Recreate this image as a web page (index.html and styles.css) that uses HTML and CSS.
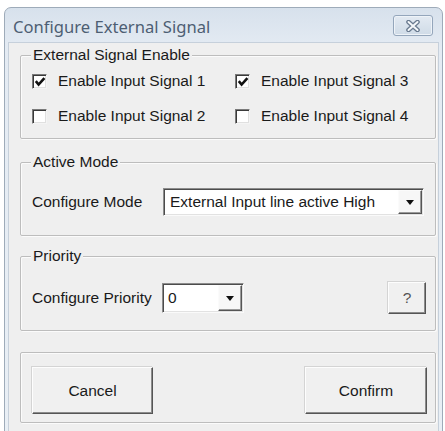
FILE: index.html
```html
<!DOCTYPE html>
<html>
<head>
<meta charset="utf-8">
<title>Configure External Signal</title>
<link rel="stylesheet" href="styles.css">
</head>
<body>
<div class="window">
  <div class="titlebar">
    <span class="title">Configure External Signal</span>
    <div class="close">
      <svg width="16" height="12" viewBox="0 0 16 12">
        <path d="M3.5 2 L12.5 10 M12.5 2 L3.5 10" stroke="#6a7b90" stroke-width="4.6" stroke-linecap="round" fill="none"/>
        <path d="M3.5 2 L12.5 10 M12.5 2 L3.5 10" stroke="#f4f7fa" stroke-width="2" stroke-linecap="round" fill="none"/>
      </svg>
    </div>
  </div>
  <div class="client">
    <div class="group g-enable">
      <span class="legend">External Signal Enable</span>
      <div class="checks">
        <div class="check"><span class="box"><svg width="12" height="12" viewBox="0 0 12 12"><path d="M1.8 5.2 L4.6 8.6 L10.4 2.2" stroke="#111" stroke-width="2.6" fill="none"/></svg></span><span>Enable Input Signal 1</span></div>
        <div class="check"><span class="box"><svg width="12" height="12" viewBox="0 0 12 12"><path d="M1.8 5.2 L4.6 8.6 L10.4 2.2" stroke="#111" stroke-width="2.6" fill="none"/></svg></span><span>Enable Input Signal 3</span></div>
        <div class="check"><span class="box"></span><span>Enable Input Signal 2</span></div>
        <div class="check"><span class="box"></span><span>Enable Input Signal 4</span></div>
      </div>
    </div>

    <div class="group g-mode">
      <span class="legend">Active Mode</span>
      <div class="row">
        <span class="label mode-label">Configure Mode</span>
        <div class="combo combo-mode">
          <span class="value">External Input line active High</span>
          <span class="drop"><span class="tri"></span></span>
        </div>
      </div>
    </div>

    <div class="group g-priority">
      <span class="legend">Priority</span>
      <div class="row prow">
        <span class="label prio-label">Configure Priority</span>
        <div class="combo combo-prio">
          <span class="value">0</span>
          <span class="drop"><span class="tri"></span></span>
        </div>
        <div class="btn help">?</div>
      </div>
    </div>

    <div class="group g-buttons">
      <div class="btn action">Cancel</div>
      <div class="btn action confirm">Confirm</div>
    </div>
  </div>
</div>
</body>
</html>
```

FILE: styles.css
```css
html, body {
  margin: 0;
  padding: 0;
  background: #ffffff;
  overflow: hidden;
}

body {
  font-family: "Liberation Sans", Arial, sans-serif;
  font-size: 15.5px;
  color: #1a1a1a;
}

.window {
  margin: 7px 0 0 4px;
  width: 439px;
  height: 440px;
  box-sizing: border-box;
  border: 1px solid #9eabb9;
  border-radius: 7px 7px 0 0;
  background: linear-gradient(#d7e1ec, #e4ebf3 40px, #e9eff5);
}

.titlebar {
  height: 34px;
  display: flex;
  align-items: flex-start;
  justify-content: space-between;
  padding: 7px 9px 0 8px;
  box-sizing: border-box;
}

.title {
  font-family: "Noto Sans", "Open Sans", sans-serif;
  font-size: 16.6px;
  line-height: 20px;
  margin-top: 2px;
  color: #4d5e73;
}

.close {
  width: 40px;
  height: 21px;
  box-sizing: border-box;
  border: 1px solid #94a6bb;
  border-radius: 3px;
  background: linear-gradient(#e3eaf2, #cfdbe7);
  box-shadow: inset 0 0 0 1px #eef3f8;
  display: flex;
  align-items: center;
  justify-content: center;
}

.close svg { display: block; }

.client {
  margin: 0 3px;
  background: #efefef;
  border: 1px solid #c6d0db;
  border-bottom: none;
  padding: 12px 2px 12px 11px;
}

.group {
  position: relative;
  border: 1px solid #bdbdbd;
  box-shadow: inset 1px 1px 0 #fbfbfb, 1px 1px 0 #fbfbfb;
  border-radius: 2px;
}

.legend {
  position: absolute;
  top: -10px;
  left: 10px;
  padding: 0 2px;
  line-height: 18px;
  background: #efefef;
}

/* group 1 */
.g-enable {
  padding: 12px 0 9px 11px;
}

.checks {
  display: grid;
  grid-template-columns: 203px 1fr;
  grid-auto-rows: 26px;
  row-gap: 9px;
}

.check {
  display: flex;
  align-items: center;
  gap: 11px;
}

.box {
  width: 15px;
  height: 15px;
  box-sizing: border-box;
  background: #fff;
  border: 1px solid;
  border-color: #7a7a7a #f4f4f4 #f4f4f4 #7a7a7a;
  box-shadow: inset 1px 1px 0 #3a3a3a, inset -1px -1px 0 #e0e0e0;
  display: flex;
  align-items: center;
  justify-content: center;
}

.box svg { display: block; margin: 1px 0 0 1px; }

/* group 2 */
.g-mode {
  margin-top: 23px;
  padding: 25px 0 19px 11px;
}

.row {
  display: flex;
  align-items: center;
}

.label {
  line-height: 18px;
}

.mode-label { width: 131px; }
.prio-label { width: 130px; }

.combo {
  display: flex;
  align-items: stretch;
  box-sizing: border-box;
  background: #fff;
  border: 1px solid;
  border-color: #8c8c8c #fafafa #fafafa #8c8c8c;
  box-shadow: inset 1px 1px 0 #4c4c4c, inset -1px -1px 0 #e2e2e2;
  padding: 1px;
}

.combo-mode {
  width: 261px;
  height: 28px;
}

.combo-prio {
  width: 82px;
  height: 30px;
}

.value {
  flex: 1;
  padding-left: 5px;
  line-height: 24px;
  white-space: nowrap;
  overflow: hidden;
}

.combo-prio .value { line-height: 26px; padding-left: 4px; }

.drop {
  width: 24px;
  box-sizing: border-box;
  background: #f7f7f7;
  border: 1px solid;
  border-color: #fbfbfb #555 #555 #fbfbfb;
  box-shadow: inset -1px -1px 0 #9a9a9a;
  display: flex;
  align-items: center;
  justify-content: center;
}

.tri {
  width: 0;
  height: 0;
  border-left: 4px solid transparent;
  border-right: 4px solid transparent;
  border-top: 5px solid #111;
}

/* group 3 */
.g-priority {
  margin-top: 20px;
  padding: 25px 9px 16px 11px;
}

.prow { height: 32px; }

.btn {
  box-sizing: border-box;
  background: #f0f0f0;
  border: 1px solid;
  border-color: #fdfdfd #555 #555 #fdfdfd;
  box-shadow: inset -1px -1px 0 #8c8c8c, -1px -1px 0 #d4d4d4;
  display: flex;
  align-items: center;
  justify-content: center;
}

.help {
  margin-left: auto;
  width: 38px;
  height: 32px;
  color: #555;
}

/* group 4 */
.g-buttons {
  margin-top: 21px;
  padding: 14px 8px 8px 11px;
  display: flex;
  justify-content: space-between;
}

.action {
  width: 121px;
  height: 47px;
}

.confirm { width: 122px; }
```
